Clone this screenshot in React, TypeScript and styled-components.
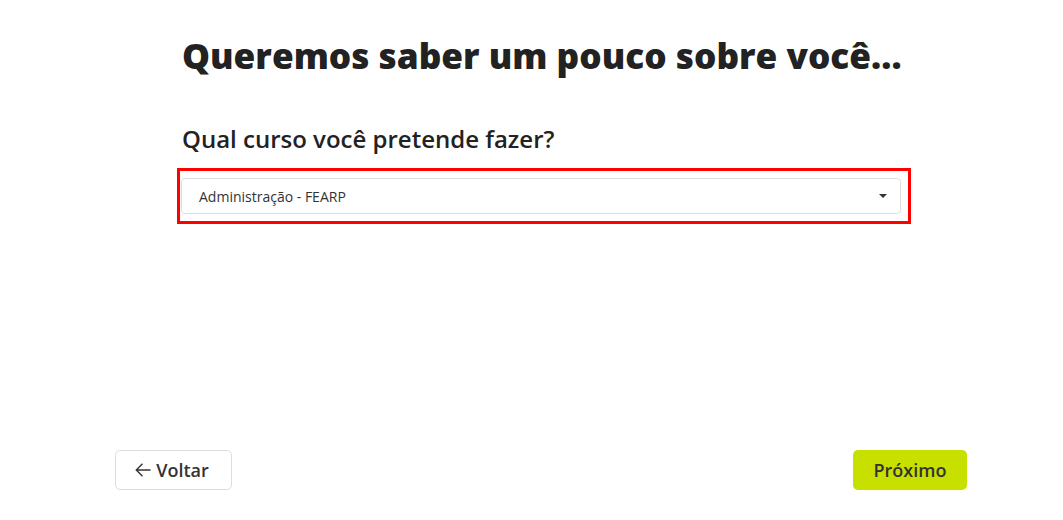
import styled, { createGlobalStyle } from "styled-components";

const GlobalStyle = createGlobalStyle`
  body {
    margin: 0;
    background: #fff;
    font-family: "Open Sans", sans-serif;
    color: #222;
  }
`;

export default function App() {
  return (
    <>
      <GlobalStyle />
      <Page>
        <Content>
          <Title>Queremos saber um pouco sobre você...</Title>
          <Question>Qual curso você pretende fazer?</Question>
          <Highlight>
            <Select>
              <SelectValue>Administração - FEARP</SelectValue>
              <Caret />
            </Select>
          </Highlight>
        </Content>
        <Footer>
          <BackButton>
            <svg width="18" height="18" viewBox="0 0 18 18" fill="none">
              <path d="M16.5 9H2.5M8.5 2.8L2.3 9l6.2 6.2" stroke="#333" strokeWidth="1.4" />
            </svg>
            Voltar
          </BackButton>
          <NextButton>Próximo</NextButton>
        </Footer>
      </Page>
    </>
  );
}

const Page = styled.div`
  height: 520px;
  display: flex;
  flex-direction: column;
  justify-content: space-between;
`;

const Content = styled.div`
  padding: 30px 0 0 177px;
  width: 734px;
`;

const Title = styled.h1`
  margin: 0 0 0 5px;
  font: 800 35.2px "Open Sans", sans-serif;
  line-height: 50px;
  white-space: nowrap;
  color: #222;
`;

const Question = styled.h2`
  margin: 42px 0 0 5px;
  font: 600 24px "Open Sans", sans-serif;
  line-height: 34px;
  color: #222;
`;

const Highlight = styled.div`
  margin-top: 12px;
  border: 3px solid #f00;
  padding: 7px 7px 7px 1px;
`;

const Select = styled.div`
  height: 36px;
  border: 1px solid #ddd;
  border-radius: 4px;
  display: flex;
  align-items: center;
  justify-content: space-between;
  padding: 0 13px 0 17px;
  box-sizing: border-box;
`;

const SelectValue = styled.span`
  font: 400 14px "Open Sans", sans-serif;
  color: #333;
`;

const Caret = styled.span`
  width: 0;
  height: 0;
  border-left: 4px solid transparent;
  border-right: 4px solid transparent;
  border-top: 4px solid #333;
`;

const Footer = styled.div`
  display: flex;
  justify-content: space-between;
  padding: 0 96px 30px 115px;
`;

const ButtonBase = styled.button`
  height: 40px;
  border-radius: 5px;
  font: 600 18px "Open Sans", sans-serif;
  color: #333;
  display: flex;
  align-items: center;
  justify-content: center;
  cursor: pointer;
`;

const BackButton = styled(ButtonBase)`
  width: 117px;
  background: #fff;
  border: 1px solid #ddd;
  gap: 4px;
  padding: 0 4px 0 0;
`;

const NextButton = styled(ButtonBase)`
  width: 114px;
  background: #c7e000;
  border: none;
`;
